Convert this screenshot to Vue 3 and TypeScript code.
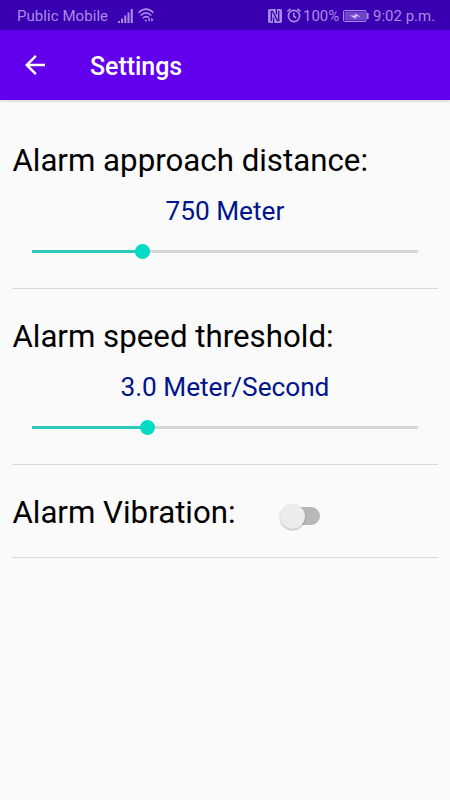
<script setup lang="ts">
import { computed, ref } from 'vue'

interface Slider {
  label: string
  value: string
  percent: number
}

const sliders = ref<Slider[]>([
  { label: 'Alarm approach distance:', value: '750 Meter', percent: 28.6 },
  { label: 'Alarm speed threshold:', value: '3.0 Meter/Second', percent: 30 },
])
const vibration = ref(false)
const switchClass = computed(() => ({ switch: true, on: vibration.value }))
</script>

<template>
  <div class="screen">
    <header class="status">
      <span class="carrier">Public Mobile</span>
      <svg class="signal" width="16" height="14" viewBox="0 0 16 14" fill="currentColor">
        <path d="M0 12h2v2H0zM3.1 9.5h2V14h-2zM6.3 6.5h2V14h-2zM9.5 3.5h2V14h-2zM12.7 0h2.1v14h-2.1z" />
      </svg>
      <svg class="wifi" width="18" height="15" viewBox="0 0 18 15">
        <g fill="none" stroke="currentColor" stroke-width="1.7">
          <path d="M.6 4.6Q8 -2.4 15.4 4.6" />
          <path d="M2.7 7.5Q8 2.4 13.3 7.5" />
          <path d="M4.9 10.2Q8 7.3 11 9.8" />
        </g>
        <path fill="currentColor" d="M6.6 12.2Q8 11 9.2 12.2L8 13.8zM12 9.8v4L9.8 11.8zM13.2 13.8v-4l2.4 2z" />
      </svg>
      <span class="spacer"></span>
      <svg class="nfc" width="14" height="14" viewBox="0 0 14 14">
        <rect width="14" height="14" rx="1.8" fill="currentColor" />
        <path fill="none" stroke="#3900b1" stroke-width="1.3" d="M3.3 12.2V2.3h1.2l5 9.3h1.2V1.8M5.6 14V8.5M8.4 0v5.5" />
      </svg>
      <svg class="clock" width="14" height="15" viewBox="0 0 14 15" fill="none" stroke="currentColor">
        <circle cx="7" cy="8" r="5.6" stroke-width="1.6" />
        <path stroke-width="1.6" d="M.4 3.4L3.6.8M13.6 3.4L10.4.8M6.8 4.8v3.4l2.4 1.6" />
      </svg>
      <span class="charge">100%</span>
      <svg class="battery" width="26" height="12" viewBox="0 0 26 12">
        <rect x=".5" y=".5" width="22.6" height="11" rx="1" fill="none" stroke="currentColor" />
        <rect x="1.5" y="1.5" width="20.6" height="9" fill="currentColor" opacity=".5" />
        <path fill="currentColor" d="M24 3h1.6v6H24z" />
        <path fill="#d6c5fa" d="M6.8 5.4l5.4 0-.5-2.2 5.5 3.2h-4.5l.5 2.6z" />
      </svg>
      <span class="time">9:02 p.m.</span>
    </header>

    <nav class="toolbar">
      <svg class="back" width="30" height="30" viewBox="0 0 24 24" fill="#fff">
        <path d="M20 11H7.83l5.59-5.59L12 4l-8 8 8 8 1.41-1.41L7.83 13H20v-2z" />
      </svg>
      <h1>Settings</h1>
    </nav>

    <main>
      <section v-for="item in sliders" :key="item.label" class="setting">
        <h2>{{ item.label }}</h2>
        <p>{{ item.value }}</p>
        <div class="slider">
          <div class="fill" :style="{ width: item.percent + '%' }"></div>
          <div class="thumb"></div>
          <div class="rest"></div>
        </div>
      </section>
      <section class="setting toggle">
        <h2>Alarm Vibration:</h2>
        <button :class="switchClass" type="button" aria-label="Alarm Vibration" @click="vibration = !vibration">
          <span class="knob"></span>
        </button>
      </section>
    </main>
  </div>
</template>

<style>
body {
  margin: 0;
  background: #fafafa;
}
</style>

<style scoped>
.screen {
  width: 450px;
  height: 800px;
  overflow: hidden;
  background: #fafafa;
  font-family: Roboto, sans-serif;
}

.status {
  box-sizing: border-box;
  height: 30px;
  padding: 1px 14px 0 17px;
  display: flex;
  align-items: center;
  background: #3900b1;
  color: #a98ce6;
  font-size: 15px;
  white-space: nowrap;
}

.status svg {
  flex: none;
}

.carrier {
  width: 91px;
  letter-spacing: 0.06px;
}

.signal {
  margin-left: 10px;
}

.wifi {
  margin-left: 4px;
}

.spacer {
  flex: 1;
}

.clock {
  margin-left: 5px;
}

.charge {
  width: 36px;
  margin-left: 2px;
}

.battery {
  margin-left: 4px;
}

.time {
  width: 63px;
  margin-left: 4px;
  letter-spacing: 0;
}

.toolbar {
  position: relative;
  height: 70px;
  display: flex;
  align-items: center;
  background: #6200ee;
  box-shadow: 0 1px 3px rgba(0, 0, 0, 0.18);
}

.back {
  margin-left: 20px;
}

h1 {
  margin: 4px 0 0 40px;
  color: #fff;
  font-size: 25px;
  font-weight: 500;
  line-height: 30px;
  letter-spacing: -0.05px;
}

main {
  padding: 13px 12.5px 0 12.4px;
}

.setting {
  box-sizing: border-box;
  height: 176px;
  padding-top: 29px;
  border-bottom: 1px solid #d9d9d9;
}

h2 {
  margin: 0;
  color: #000;
  font-size: 31.25px;
  font-weight: 400;
  line-height: 37px;
}

p {
  margin: 17px 0 0;
  color: #00148c;
  font-size: 26.25px;
  line-height: 31px;
  text-align: center;
  letter-spacing: -0.04px;
}

.slider {
  height: 15px;
  margin: 17px 20px 0;
  display: flex;
  align-items: center;
}

.fill {
  height: 3px;
  flex: none;
  background: #2cc9ba;
}

.thumb {
  flex: none;
  width: 15px;
  height: 15px;
  margin: 0 -7.5px;
  z-index: 1;
  border-radius: 50%;
  background: #03dac5;
}

.rest {
  flex: 1;
  height: 3px;
  background: #d6d6d6;
}

.toggle {
  height: 93px;
  display: flex;
}

.switch {
  width: 37px;
  height: 18px;
  margin: 13px 0 0 47px;
  padding: 0;
  display: flex;
  align-items: center;
  border: 0;
  border-radius: 9px;
  background: #b8b8b8;
}

.switch.on {
  justify-content: flex-end;
  background: #80e9df;
}

.knob {
  flex: none;
  width: 25px;
  height: 25px;
  margin: 0 -3px;
  border-radius: 50%;
  background: #ececec;
  box-shadow: 0 1px 2px rgba(0, 0, 0, 0.3);
}
</style>
